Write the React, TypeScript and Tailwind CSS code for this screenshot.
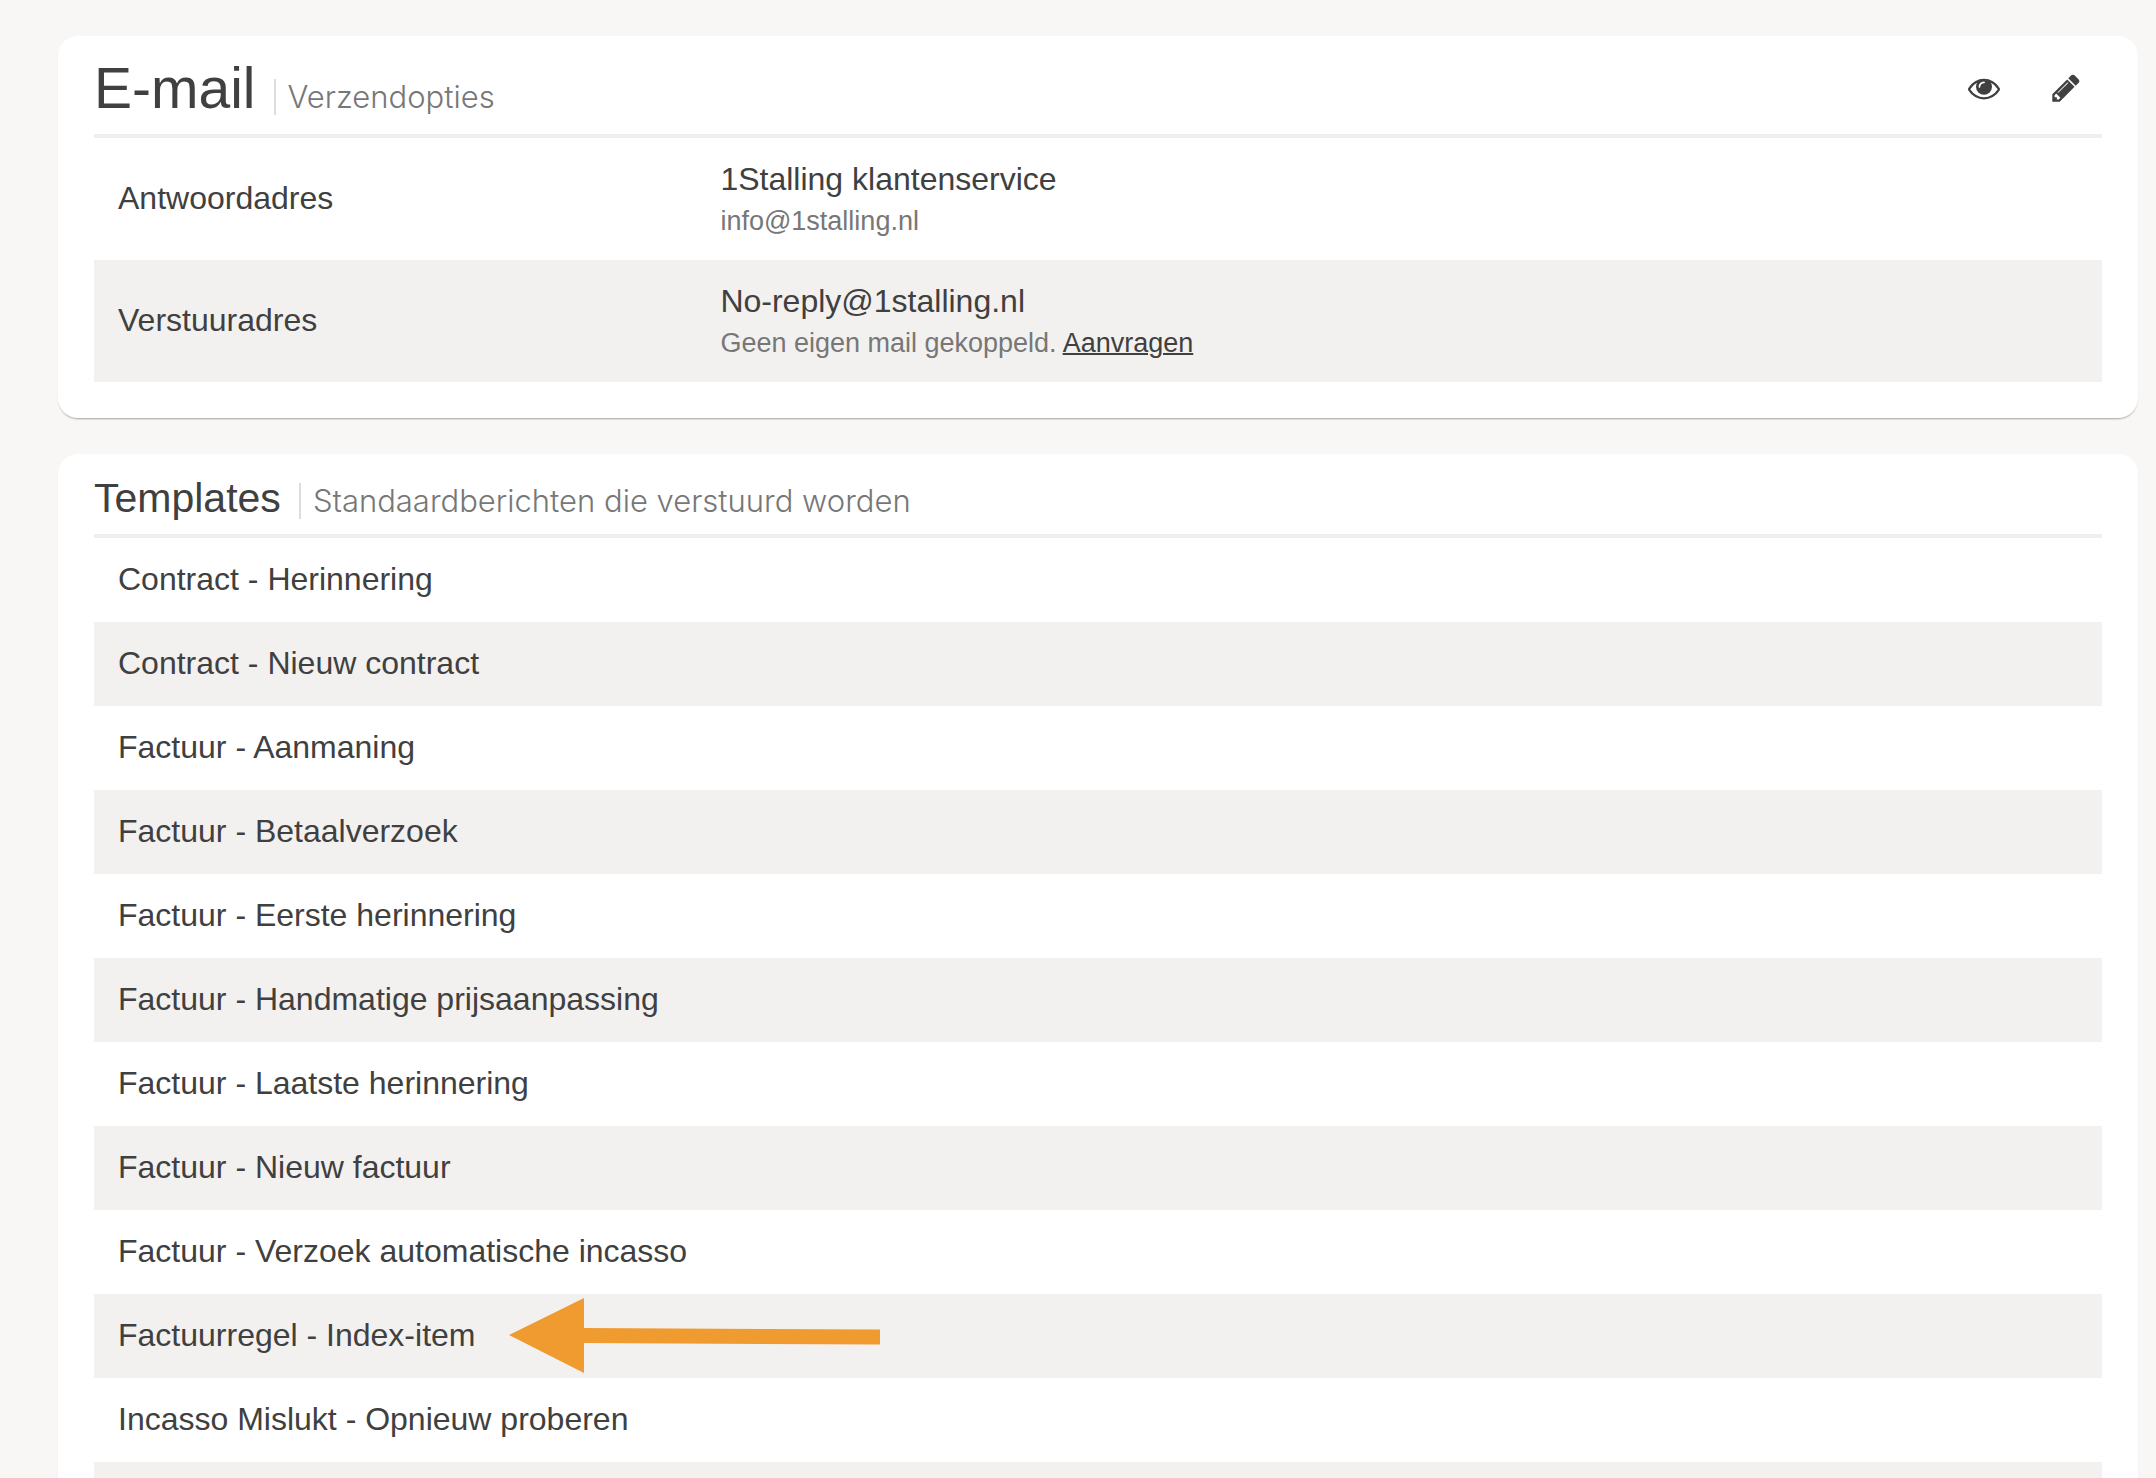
import type { ReactNode } from "react";

const templates = [
  "Contract - Herinnering",
  "Contract - Nieuw contract",
  "Factuur - Aanmaning",
  "Factuur - Betaalverzoek",
  "Factuur - Eerste herinnering",
  "Factuur - Handmatige prijsaanpassing",
  "Factuur - Laatste herinnering",
  "Factuur - Nieuw factuur",
  "Factuur - Verzoek automatische incasso",
  "Factuurregel - Index-item",
  "Incasso Mislukt - Opnieuw proberen",
];

const highlighted = "Factuurregel - Index-item";

function EyeIcon() {
  return (
    <svg viewBox="0 0 1792 1792" className="size-8 fill-current" aria-hidden="true">
      <path d="M1664 960q-152-236-381-353 61 104 61 225 0 185-131.5 316.5t-316.5 131.5-316.5-131.5-131.5-316.5q0-121 61-225-229 117-381 353 133 205 333.5 326.5t434.5 121.5 434.5-121.5 333.5-326.5zm-720-384q0-20-14-34t-34-14q-125 0-214.5 89.5t-89.5 214.5q0 20 14 34t34 14 34-14 14-34q0-86 61-147t147-61q20 0 34-14t14-34zm848 384q0 34-20 69-140 230-376.5 368.5t-499.5 138.5-499.5-139-376.5-368q-20-35-20-69t20-69q140-229 376.5-368t499.5-139 499.5 139 376.5 368q20 35 20 69z" />
    </svg>
  );
}

function PencilIcon() {
  return (
    <svg viewBox="0 0 1792 1792" className="size-8 fill-current" aria-hidden="true">
      <path d="M491 1536l91-91-235-235-91 91v107h128v128h107zm523-928q0-22-22-22-10 0-17 7l-542 542q-7 7-7 17 0 22 22 22 10 0 17-7l542-542q7-7 7-17zm-54-192l416 416-832 832h-416v-416zm683 96q0 53-37 90l-166 166-416-416 166-165q36-38 90-38 53 0 91 38l235 234q37 39 37 91z" />
    </svg>
  );
}

function Arrow() {
  return (
    <svg
      viewBox="0 0 372 76"
      className="absolute left-[415px] top-1 h-[76px] w-[372px]"
      aria-hidden="true"
    >
      <path d="M0 37 L75 0 V30 L371 31.500 V46.500 L75 45 V75 Z" fill="#ef9b30" />
    </svg>
  );
}

function Card({ children }: { children: ReactNode }) {
  return (
    <section className="rounded-[20px] bg-white px-9 pb-9 shadow-[0_2px_2px_-1px_rgba(0,0,0,0.35)]">
      {children}
    </section>
  );
}

function Subtitle({ children }: { children: ReactNode }) {
  return (
    <p className="border-l-2 border-[#dddddd] pl-3 font-['Inter'] text-[31px] font-light leading-9 text-[#777777]">
      {children}
    </p>
  );
}

export default function App() {
  return (
    <main className="flex h-screen flex-col gap-9 overflow-hidden bg-[#f8f7f5] pl-[58px] pr-[18px] pt-9 font-['Liberation_Sans',sans-serif] text-[32px] text-[#404040] *:shrink-0">
      <Card>
        <header className="flex items-center justify-between border-b-4 border-[#eeeeee] pb-3.5 pt-5">
          <div className="flex items-baseline gap-[18px]">
            <h1 className="text-[57px] leading-16">E-mail</h1>
            <Subtitle>Verzendopties</Subtitle>
          </div>
          <div className="flex gap-[50px] pr-5">
            <button type="button" aria-label="Bekijken">
              <EyeIcon />
            </button>
            <button type="button" aria-label="Bewerken">
              <PencilIcon />
            </button>
          </div>
        </header>
        <table className="w-full table-fixed text-left">
          <tbody>
            <tr>
              <th scope="row" className="w-[30%] px-6 pb-0.5 font-normal">
                Antwoordadres
              </th>
              <td className="px-6 pb-[18px] pt-5">
                <div className="leading-[42px]">1Stalling klantenservice</div>
                <div className="text-[27px] leading-[42px] text-[#777777]">info@1stalling.nl</div>
              </td>
            </tr>
            <tr className="bg-[#f3f1ef]">
              <th scope="row" className="px-6 pb-0.5 font-normal">
                Verstuuradres
              </th>
              <td className="px-6 pb-[18px] pt-5">
                <div className="leading-[42px]">No-reply@1stalling.nl</div>
                <div className="text-[27px] leading-[42px] text-[#777777]">
                  Geen eigen mail gekoppeld.{" "}
                  <a href="#aanvragen" className="text-[#404040] underline decoration-2">
                    Aanvragen
                  </a>
                </div>
              </td>
            </tr>
          </tbody>
        </table>
      </Card>

      <Card>
        <header className="flex items-baseline gap-[18px] border-b-4 border-[#eeeeee] pb-[9px] pt-[17px]">
          <h2 className="text-[41px] leading-[54px]">Templates</h2>
          <Subtitle>Standaardberichten die verstuurd worden</Subtitle>
        </header>
        <ul>
          {templates.map((name) => (
            <li key={name} className="relative even:bg-[#f3f1ef]">
              <a href="#template" className="block px-6 pb-0.5 leading-[82px]">
                {name}
              </a>
              {name === highlighted && <Arrow />}
            </li>
          ))}
          <li className="h-[84px] bg-[#f3f1ef]" />
        </ul>
      </Card>
    </main>
  );
}
